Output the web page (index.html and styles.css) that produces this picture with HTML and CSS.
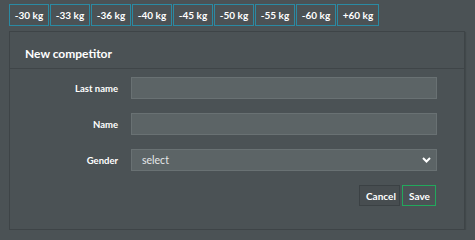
FILE: index.html
```html
<!DOCTYPE html>
<html>
<head>
<meta charset="utf-8">
<link rel="stylesheet" href="styles.css">
</head>
<body>
<div class="weights">
  <button class="wbtn">-30 kg</button>
  <button class="wbtn">-33 kg</button>
  <button class="wbtn">-36 kg</button>
  <button class="wbtn">-40 kg</button>
  <button class="wbtn">-45 kg</button>
  <button class="wbtn">-50 kg</button>
  <button class="wbtn">-55 kg</button>
  <button class="wbtn">-60 kg</button>
  <button class="wbtn wide">+60 kg</button>
</div>
<div class="panel">
  <div class="panel-head">New competitor</div>
  <div class="panel-body">
    <div class="row">
      <label class="lbl">Last name</label>
      <div class="field"></div>
    </div>
    <div class="row">
      <label class="lbl">Name</label>
      <div class="field"></div>
    </div>
    <div class="row">
      <label class="lbl">Gender</label>
      <div class="field select">
        <span>select</span>
        <svg class="chev" width="9" height="6" viewBox="0 0 9 6"><path d="M1 1 L4.5 4.5 L8 1" fill="none" stroke="#ffffff" stroke-width="2"/></svg>
      </div>
    </div>
    <div class="actions">
      <button class="btn cancel">Cancel</button>
      <button class="btn save">Save</button>
    </div>
  </div>
</div>
</body>
</html>
```
FILE: styles.css
```css
html, body {
  margin: 0;
  padding: 0;
  background: #4b5255;
  font-family: Lato, "Open Sans", sans-serif;
  color: #ffffff;
}
.weights {
  display: flex;
  gap: 1px;
  padding: 4px 0 0 9px;
  height: 22px;
}
.wbtn {
  box-sizing: border-box;
  width: 40px;
  height: 22px;
  padding: 0;
  border: 1px solid #2a8aa3;
  background: #4b5255;
  color: #ffffff;
  font-family: inherit;
  font-size: 10px;
  font-weight: 700;
  line-height: 20px;
  text-align: center;
}
.wide {
  width: 42px;
}
.panel {
  box-sizing: border-box;
  margin: 5px 0 0 9px;
  width: 456px;
  height: 199px;
  border: 1px solid #3e4447;
  box-shadow: 1px 1px 1px rgba(0,0,0,0.12);
}
.panel-head {
  box-sizing: border-box;
  height: 37px;
  padding: 8px 15px 0;
  border-bottom: 1px solid #3f4548;
  font-size: 12px;
  font-weight: 700;
  line-height: 27px;
}
.panel-body {
  padding-top: 8px;
}
.row {
  display: flex;
  align-items: center;
  height: 22px;
  margin-bottom: 14px;
}
.lbl {
  box-sizing: border-box;
  width: 120px;
  padding-right: 12px;
  text-align: right;
  font-size: 9.5px;
  font-weight: 700;
}
.field {
  box-sizing: border-box;
  width: 306px;
  height: 22px;
  margin-left: 1px;
  background: #5c6466;
  border: 1px solid #697173;
}
.select {
  display: flex;
  align-items: center;
  justify-content: space-between;
  padding: 0 5px 0 10px;
  font-size: 10.5px;
  color: #e6e8ea;
}
.chev {
  display: block;
}
.actions {
  display: flex;
  justify-content: flex-end;
  gap: 2px;
  padding-right: 28px;
  margin-top: 1px;
}
.btn {
  box-sizing: border-box;
  height: 21px;
  font-family: inherit;
  font-size: 10px;
  font-weight: 700;
  color: #ffffff;
}
.cancel {
  width: 41px;
  background: #474d50;
  border: 1px solid #3b4144;
}
.save {
  width: 34px;
  background: #4b5255;
  border: 1px solid #22a85c;
}
```
